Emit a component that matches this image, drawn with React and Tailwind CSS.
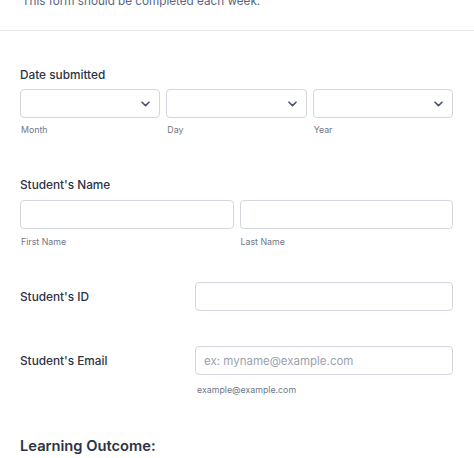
import React from "react";

function Chevron() {
  return (
    <svg width="9" height="6" viewBox="0 0 9 6" fill="none">
      <path d="M1 1.2L4.5 4.6L8 1.2" stroke="#4b5467" strokeWidth="1.6" strokeLinecap="round" strokeLinejoin="round" />
    </svg>
  );
}

function SelectBox({ sub }) {
  return (
    <div className="flex flex-col">
      <div className="h-[29px] rounded-[4px] border border-[#d3d7df] bg-white flex items-center justify-end pr-[9px]">
        <Chevron />
      </div>
      <div className="mt-[5px] pl-[1px] text-[8.8px] leading-[14px] text-[#6f7789]">{sub}</div>
    </div>
  );
}

function TextBox({ placeholder }) {
  return (
    <input
      className="h-[29px] w-full rounded-[4px] border border-[#d3d7df] bg-white px-[8px] text-[11.5px] text-[#2c3345] outline-none placeholder:text-[#9aa1af]"
      placeholder={placeholder}
      readOnly
    />
  );
}

export default function App() {
  return (
    <div className="w-[474px] h-[458px] overflow-hidden bg-white text-[#2c3345] flex flex-col" style={{ fontFamily: "Inter, 'Noto Sans', sans-serif" }}>
      <div className="h-[31px] shrink-0 border-b border-[#e6e8ec] flex flex-col">
        <p className="-mt-[9px] pl-[22px] text-[11.7px] leading-[20px] text-[#57647e]">This form should be completed each week.</p>
      </div>

      <div className="pl-[20px] pr-[21px]">
        <div className="mt-[36px] text-[11.8px] font-medium leading-[16px]">Date submitted</div>
        <div className="mt-[6px] grid grid-cols-3 gap-[6px]">
          <SelectBox sub="Month" />
          <SelectBox sub="Day" />
          <SelectBox sub="Year" />
        </div>

        <div className="mt-[40px] text-[11.8px] font-medium leading-[16px]">Student's Name</div>
        <div className="mt-[7px] grid grid-cols-2 gap-[6px]">
          <div className="flex flex-col">
            <TextBox />
            <div className="mt-[6px] pl-[1px] text-[8.8px] leading-[14px] text-[#6f7789]">First Name</div>
          </div>
          <div className="flex flex-col">
            <TextBox />
            <div className="mt-[6px] pl-[1px] text-[8.8px] leading-[14px] text-[#6f7789]">Last Name</div>
          </div>
        </div>

        <div className="mt-[33px] flex items-center">
          <div className="w-[175px] text-[11.8px] font-medium leading-[16px]">Student's ID</div>
          <div className="flex-1"><TextBox /></div>
        </div>

        <div className="mt-[35px] flex items-center">
          <div className="w-[175px] text-[11.8px] font-medium leading-[16px]">Student's Email</div>
          <div className="flex-1"><TextBox placeholder="ex: myname@example.com" /></div>
        </div>
        <div className="mt-[8px] pl-[177px] text-[8.8px] leading-[14px] text-[#6f7789]">example@example.com</div>

        <div className="mt-[39px] text-[14.7px] font-semibold leading-[20px]">Learning Outcome:</div>
      </div>
    </div>
  );
}
